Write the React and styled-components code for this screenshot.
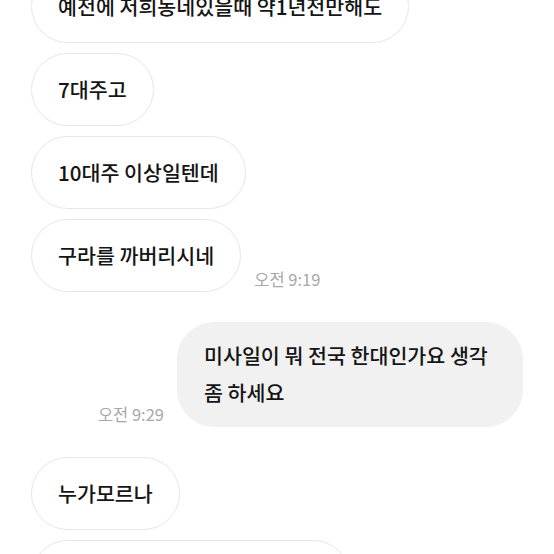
import styled, { createGlobalStyle } from "styled-components";

const GlobalStyle = createGlobalStyle`
	html, body {
		margin: 0;
		padding: 0;
		background: #ffffff;
		overflow: hidden;
	}
	body {
		font-family: "Noto Sans CJK KR", "Noto Sans", sans-serif;
		color: #151515;
	}
`;

const Chat = styled.div`
	display: flex;
	flex-direction: column;
	margin-top: -30px;
	padding: 0 31px;
`;

const Group = styled.div`
	display: flex;
	flex-direction: column;
	align-items: ${(p) => (p.$mine ? "flex-end" : "flex-start")};
	gap: 10px;
	margin-bottom: ${(p) => (p.$last ? "0" : "30px")};
`;

const Row = styled.div`
	display: flex;
	flex-direction: ${(p) => (p.$mine ? "row-reverse" : "row")};
	align-items: flex-end;
	gap: 13px;
`;

const Bubble = styled.div`
	box-sizing: border-box;
	padding: ${(p) => (p.$mine ? "14px 26px 15px" : "17px 26px")};
	border-radius: 37px;
	font-size: 20.6px;
	font-weight: 500;
	line-height: 37px;
	white-space: ${(p) => (p.$mine ? "normal" : "nowrap")};
	max-width: ${(p) => (p.$mine ? "346px" : "none")};
	background: ${(p) => (p.$mine ? "#f1f1f1" : "#ffffff")};
	border: 1px solid ${(p) => (p.$mine ? "#f1f1f1" : "#e6e6e6")};
`;

const Time = styled.span`
	font-size: 16.5px;
	line-height: 20px;
	color: #a8a8a8;
	white-space: nowrap;
	padding-bottom: 3px;
`;

export default function App() {
	return (
		<>
			<GlobalStyle />
			<Chat>
				<Group>
					<Bubble>예전에 저희동네있을때 약1년전만해도</Bubble>
					<Bubble>7대주고</Bubble>
					<Bubble>10대주 이상일텐데</Bubble>
					<Row>
						<Bubble>구라를 까버리시네</Bubble>
						<Time>오전 9:19</Time>
					</Row>
				</Group>
				<Group $mine>
					<Row $mine>
						<Bubble $mine>미사일이 뭐 전국 한대인가요 생각 좀 하세요</Bubble>
						<Time>오전 9:29</Time>
					</Row>
				</Group>
				<Group $last>
					<Bubble>누가모르나</Bubble>
					<Bubble>그 동네 사람들은 다 알고있어요</Bubble>
				</Group>
			</Chat>
		</>
	);
}
